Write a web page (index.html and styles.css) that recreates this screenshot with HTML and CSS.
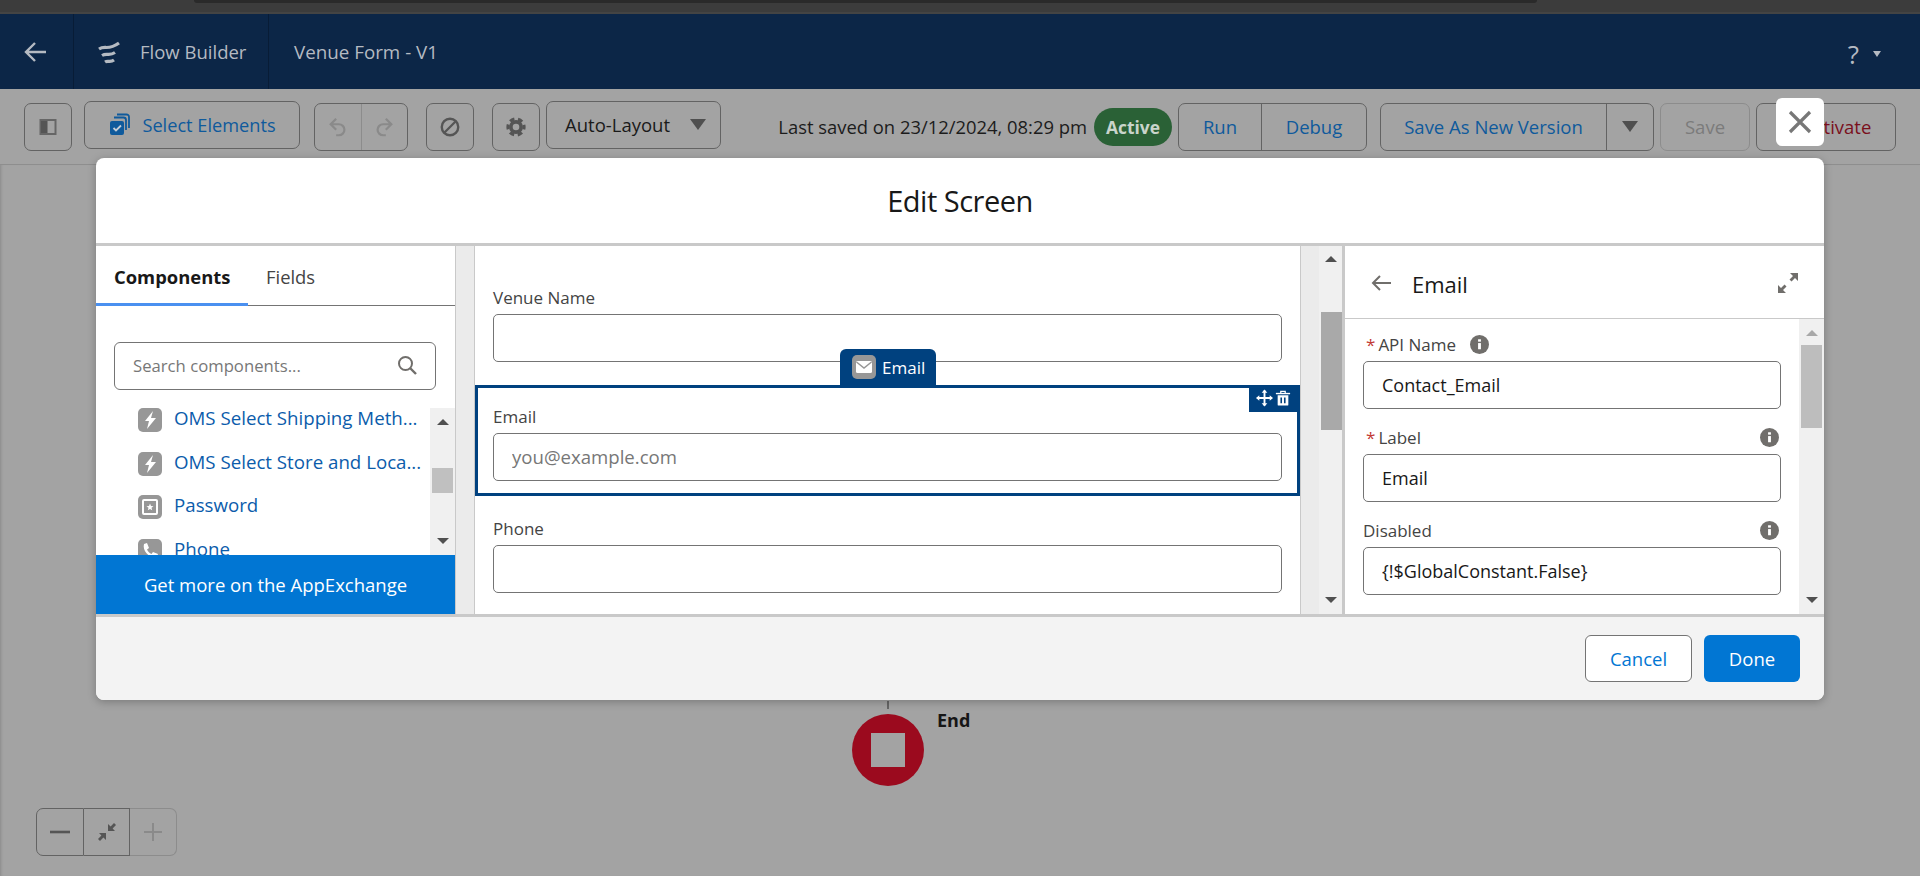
FILE: index.html
```html
<!DOCTYPE html>
<html lang="en">
<head>
<meta charset="UTF-8">
<title>Flow Builder - Venue Form</title>
<link rel="stylesheet" href="styles.css">
</head>
<body>
<div class="browser-strip"><div class="browser-tab"></div></div>

<header class="app-header">
  <div class="header-back">
    <svg class="icon-24" viewBox="0 0 24 24"><path d="M22 12H3M11 3l-9 9 9 9" fill="none" stroke="#b5bac2" stroke-width="2.4"/></svg>
  </div>
  <div class="header-brand">
    <svg class="icon-24" viewBox="0 0 24 24"><path d="M2 9c6-4 9 2 20-6M5 15.500c5-3 7 1 13-3M8 22c3-2 5 1 9-2" fill="none" stroke="#b5bac2" stroke-width="3.200"/></svg>
    <span>Flow Builder</span>
  </div>
  <div class="header-title">Venue Form - V1</div>
  <div class="header-help">?<span class="caret-small"></span></div>
</header>

<div class="toolbar">
  <button class="tool w48"><svg class="icon-18" viewBox="0 0 18 18"><rect x="1.500" y="2" width="15" height="14" fill="none" stroke="#666" stroke-width="2"/><rect x="2" y="3" width="6.500" height="12" fill="#555"/></svg></button>
  <button class="tool raised select-btn">
    <svg class="icon-24" viewBox="0 0 24 24"><path d="M9 1.500h9.500a2.500 2.500 0 0 1 2.500 2.500v11" fill="none" stroke="#0f5a9c" stroke-width="1.800"/><path d="M6 4.500h9.500a2.500 2.500 0 0 1 2.500 2.500v10" fill="none" stroke="#0f5a9c" stroke-width="1.800"/><rect x="2" y="8" width="14" height="14" rx="2" fill="#0f5a9c"/><path d="M5.500 15l2.500 2.500 5-5" fill="none" stroke="#c5cdd6" stroke-width="1.800"/></svg>
    Select Elements
  </button>
  <div class="tool-group undo-group">
    <button class="tool-seg off"><svg class="icon-22" viewBox="0 0 24 24"><path d="M10 3L4 9l6 6M4 9h9a6 6 0 0 1 0 12h-3" fill="none" stroke="#8a8a8a" stroke-width="2.400"/></svg></button>
    <button class="tool-seg off"><svg class="icon-22" viewBox="0 0 24 24"><path d="M14 3l6 6-6 6M20 9h-9a6 6 0 0 0 0 12h3" fill="none" stroke="#8a8a8a" stroke-width="2.400"/></svg></button>
  </div>
  <button class="tool w48 stop-btn"><svg class="icon-22" viewBox="0 0 24 24"><circle cx="12" cy="12" r="9" fill="none" stroke="#555" stroke-width="2.600"/><path d="M6 18L18 6" stroke="#555" stroke-width="2.600"/></svg></button>
  <button class="tool w48 gear-btn"><svg class="icon-22" viewBox="0 0 24 24"><circle cx="12" cy="12" r="8.800" fill="none" stroke="#555" stroke-width="3.400" stroke-dasharray="5.200 4" stroke-dashoffset="2.600"/><circle cx="12" cy="12" r="5.600" fill="none" stroke="#555" stroke-width="4"/></svg></button>
  <button class="tool raised layout-btn">Auto-Layout<span class="caret"></span></button>

  <div class="toolbar-right">
    <span class="saved-text">Last saved on 23/12/2024, 08:29 pm</span>
    <span class="status-pill">Active</span>
    <div class="tool-group run-group">
      <button class="tool-seg link run-seg">Run</button>
      <button class="tool-seg link debug-seg">Debug</button>
    </div>
    <div class="tool-group save-group">
      <button class="tool-seg link saveas-seg">Save As New Version</button>
      <button class="tool-seg menu-seg"><span class="caret"></span></button>
    </div>
    <button class="tool off-btn save-btn">Save</button>
    <button class="tool deactivate-btn">Deactivate</button>
  </div>
</div>

<main class="canvas">
  <div class="end-line"></div>
  <div class="end-node"><div class="end-square"></div></div>
  <div class="end-label">End</div>

  <div class="zoom-control">
    <button class="zoom-seg"><svg class="icon-20" viewBox="0 0 20 20"><path d="M0 10h20" stroke="#555" stroke-width="2.600"/></svg></button>
    <button class="zoom-seg zoom-mid"><svg class="icon-20" viewBox="0 0 20 20"><path d="M11 9h7l-2.400-2.400L19 3l-2-2-3.400 3.400L11 2zM9 11H2l2.400 2.400L1 17l2 2 3.400-3.400L9 18z" fill="#555"/></svg></button>
    <button class="zoom-seg zoom-off"><svg class="icon-20" viewBox="0 0 20 20"><path d="M1 10h18M10 1v18" stroke="#8a8a8a" stroke-width="2"/></svg></button>
  </div>
</main>

<section class="modal">
  <button class="modal-close"><svg class="icon-26" viewBox="0 0 26 26"><path d="M3 3l20 20M23 3L3 23" stroke="#777" stroke-width="3.200"/></svg></button>
  <h1 class="modal-title">Edit Screen</h1>

  <div class="modal-body">
    <aside class="palette">
      <div class="tabs">
        <div class="tab tab-active">Components</div>
        <div class="tab">Fields</div>
      </div>
      <div class="search-wrap">
        <div class="search-box">
          <span>Search components...</span>
          <svg class="icon-20" viewBox="0 0 20 20"><circle cx="8.500" cy="8.500" r="6.500" fill="none" stroke="#706e6b" stroke-width="2"/><path d="M13 13l6 6" stroke="#706e6b" stroke-width="2.400"/></svg>
        </div>
      </div>
      <div class="palette-list-wrap">
        <ul class="palette-list">
          <li><span class="comp-icon"><svg viewBox="0 0 24 24"><path d="M15 3l-8 10h4l-2 8 9-11h-5z" fill="#fff"/></svg></span><span class="comp-name">OMS Select Shipping Meth...</span></li>
          <li><span class="comp-icon"><svg viewBox="0 0 24 24"><path d="M15 3l-8 10h4l-2 8 9-11h-5z" fill="#fff"/></svg></span><span class="comp-name">OMS Select Store and Loca...</span></li>
          <li><span class="comp-icon"><svg viewBox="0 0 24 24"><rect x="5" y="5" width="14" height="14" rx="1" fill="none" stroke="#fff" stroke-width="2"/><path d="M12 8.500l1 2.500 2.500.2-2 1.600.7 2.500-2.200-1.400-2.200 1.400.7-2.500-2-1.600 2.500-.2z" fill="#fff"/></svg></span><span class="comp-name">Password</span></li>
          <li><span class="comp-icon"><svg viewBox="0 0 24 24"><path d="M6 5l3-1 2 5-2 1.500c1 2 2.500 3.500 4.500 4.500l1.500-2 5 2-1 3c-7 2-15-6-13-13z" fill="#fff"/></svg></span><span class="comp-name">Phone</span></li>
        </ul>
        <div class="scrollbar list-scroll">
          <span class="arrow-up"></span>
          <span class="thumb"></span>
          <span class="arrow-down"></span>
        </div>
      </div>
      <div class="appexchange">Get more on the AppExchange</div>
    </aside>

    <div class="gutter"></div>

    <div class="screen-canvas">
      <div class="screen-field">
        <label class="field-label">Venue Name</label>
        <input class="text-input" type="text">
      </div>
      <div class="screen-field selected">
        <div class="selected-tab">
          <span class="comp-icon"><svg viewBox="0 0 24 24"><rect x="4" y="6" width="16" height="12" rx="1.500" fill="#fff"/><path d="M4.500 7l7.500 6 7.500-6" fill="none" stroke="#979797" stroke-width="1.500"/></svg></span>
          Email
        </div>
        <div class="selected-actions">
          <svg class="icon-move" viewBox="0 0 18 18"><path d="M9 1v16M1 9h16" stroke="#fff" stroke-width="2"/><path d="M9 0l3 3.500H6zM9 18l3-3.500H6zM0 9l3.500-3v6zM18 9l-3.500-3v6z" fill="#fff"/></svg>
          <svg class="icon-trash" viewBox="0 0 18 18"><path d="M1 4h16" stroke="#fff" stroke-width="1.600"/><path d="M6.500 3.500V1.500h5v2" fill="none" stroke="#fff" stroke-width="1.400"/><path d="M3 6h12v10.500a1 1 0 0 1-1 1H4a1 1 0 0 1-1-1z" fill="#fff"/><path d="M7 8.500v6.500M11 8.500v6.500" stroke="#00417f" stroke-width="1.800"/></svg>
        </div>
        <label class="field-label">Email</label>
        <input class="text-input" type="text" placeholder="you@example.com">
      </div>
      <div class="screen-field">
        <label class="field-label">Phone</label>
        <input class="text-input" type="text">
      </div>
    </div>

    <div class="gutter gutter-right"></div>
    <div class="scrollbar canvas-scroll">
      <span class="arrow-up"></span>
      <span class="thumb"></span>
      <span class="arrow-down"></span>
    </div>

    <aside class="props">
      <div class="props-header">
        <svg class="icon-20" viewBox="0 0 20 20"><path d="M20 10H2M9 3l-7 7 7 7" fill="none" stroke="#706e6b" stroke-width="2"/></svg>
        <span class="props-title">Email</span>
        <svg class="icon-22 props-expand" viewBox="0 0 22 22"><path d="M13 1h8v8l-3-3-3.500 3.500-2-2L16 4zM1 13v8h8l-3-3 3.500-3.500-2-2L4 16z" fill="#706e6b"/></svg>
      </div>
      <div class="props-scroll-area">
        <div class="props-form">
          <div class="prop-field">
            <div class="prop-label"><span class="req">*</span>API Name
              <svg class="info api-info" viewBox="0 0 20 20"><circle cx="10" cy="10" r="10" fill="#706e6b"/><rect x="8.500" y="8.500" width="3" height="6.500" fill="#fff"/><rect x="8.500" y="4.500" width="3" height="2.500" fill="#fff"/></svg>
            </div>
            <input class="text-input" type="text" value="Contact_Email">
          </div>
          <div class="prop-field">
            <div class="prop-label"><span class="req">*</span>Label
              <svg class="info" viewBox="0 0 20 20"><circle cx="10" cy="10" r="10" fill="#706e6b"/><rect x="8.500" y="8.500" width="3" height="6.500" fill="#fff"/><rect x="8.500" y="4.500" width="3" height="2.500" fill="#fff"/></svg>
            </div>
            <input class="text-input" type="text" value="Email">
          </div>
          <div class="prop-field">
            <div class="prop-label">Disabled
              <svg class="info" viewBox="0 0 20 20"><circle cx="10" cy="10" r="10" fill="#706e6b"/><rect x="8.500" y="8.500" width="3" height="6.500" fill="#fff"/><rect x="8.500" y="4.500" width="3" height="2.500" fill="#fff"/></svg>
            </div>
            <input class="text-input" type="text" value="{!$GlobalConstant.False}">
          </div>
        </div>
        <div class="scrollbar props-scroll">
          <span class="arrow-up dim"></span>
          <span class="thumb"></span>
          <span class="arrow-down"></span>
        </div>
      </div>
    </aside>
  </div>

  <footer class="modal-footer">
    <button class="btn-cancel">Cancel</button>
    <button class="btn-done">Done</button>
  </footer>
</section>
</body>
</html>
```

FILE: styles.css
```css
* {
  box-sizing: border-box;
}
html, body {
  margin: 0;
  padding: 0;
  height: 876px;
  overflow: hidden;
}
body {
  font-family: "Open Sans", "Noto Sans", sans-serif;
  font-size: 18px;
  color: #181818;
  background-color: #a3a3a3;
  display: flex;
  flex-direction: column;
}
button, input {
  font-family: inherit;
  font-size: inherit;
  margin: 0;
}
svg {
  display: block;
  flex: none;
}
.icon-18 { width: 18px; height: 18px; }
.icon-20 { width: 20px; height: 20px; }
.icon-22 { width: 22px; height: 22px; }
.icon-24 { width: 24px; height: 24px; }
.icon-26 { width: 26px; height: 26px; }
.icon-move { width: 17px; height: 18px; }
.icon-trash { width: 16px; height: 18px; }

/* top of the browser window */
.browser-strip {
  height: 14px;
  flex: none;
  background-color: #3c3c3c;
  border-bottom: 2px solid #444;
}
.browser-tab {
  margin-left: 194px;
  width: 1343px;
  height: 3px;
  background-color: #2a2a2a;
  border-radius: 0 0 4px 4px;
}

/* navy app header */
.app-header {
  height: 75px;
  flex: none;
  display: flex;
  align-items: center;
  background-color: #0c2647;
  color: #b5bac2;
  font-size: 18.500px;
}
.header-back {
  width: 74px;
  height: 100%;
  display: flex;
  align-items: center;
  padding-left: 24px;
  border-right: 1px solid #081c36;
}
.header-brand {
  width: 195px;
  height: 100%;
  display: flex;
  align-items: center;
  gap: 19px;
  padding-left: 23px;
  border-right: 1px solid #081c36;
}
.header-title {
  padding-left: 25px;
  font-size: 18.800px;
}
.header-help {
  margin-left: auto;
  margin-right: 39px;
  display: flex;
  align-items: center;
  gap: 14px;
  font-size: 26px;
  padding-top: 4px;
}
.caret-small {
  width: 0;
  height: 0;
  border-left: 4px solid transparent;
  border-right: 4px solid transparent;
  border-top: 6px solid #b5bac2;
}

/* toolbar under the header */
.toolbar {
  height: 76px;
  flex: none;
  display: flex;
  align-items: center;
  padding: 0 24px;
  background-color: #a3a3a3;
  border-bottom: 1px solid #8e8e8e;
}
.tool {
  height: 48px;
  background: transparent;
  border: 1px solid #636363;
  border-radius: 7px;
  color: #0f5a9c;
  display: flex;
  align-items: center;
  justify-content: center;
  padding: 0;
}
.w48 { width: 48px; }
.raised {
  margin-bottom: 4px;
}
.select-btn {
  width: 216px;
  margin-left: 12px;
  gap: 10px;
  font-size: 18.200px;
}
.undo-group { margin-left: 14px; width: 94px; border-color: #8c8c8c; }
.stop-btn { margin-left: 18px; }
.gear-btn { margin-left: 18px; }
.layout-btn {
  width: 175px;
  margin-left: 6px;
  color: #1a1a1a;
  font-size: 18.500px;
  justify-content: flex-start;
  padding-left: 18px;
}
.layout-btn .caret {
  margin-left: 20px;
}
.caret {
  width: 0;
  height: 0;
  border-left: 8px solid transparent;
  border-right: 8px solid transparent;
  border-top: 11px solid #4f4f4f;
}
.tool-group {
  height: 48px;
  display: flex;
  border: 1px solid #636363;
  border-radius: 7px;
}
.tool-seg {
  height: 100%;
  background: transparent;
  border: 0;
  border-right: 1px solid #636363;
  display: flex;
  align-items: center;
  justify-content: center;
  padding: 0;
  flex: 1;
}
.tool-seg:last-child {
  border-right: 0;
}
.undo-group .tool-seg {
  border-color: #8c8c8c;
}
.link {
  color: #0f5a9c;
  font-size: 18.500px;
}
.toolbar-right {
  margin-left: auto;
  display: flex;
  align-items: center;
}
.saved-text {
  font-size: 18.400px;
  color: #1c1c1c;
  white-space: nowrap;
  margin-right: 7px;
}
.status-pill {
  width: 78px;
  height: 38px;
  border-radius: 19px;
  background-color: #2a6136;
  color: #c9d4cb;
  font-weight: 700;
  font-size: 17.400px;
  display: flex;
  align-items: center;
  justify-content: center;
}
.run-group { margin-left: 6px; width: 189px; }
.run-seg { flex: none; width: 83px; }
.save-group { margin-left: 13px; width: 274px; }
.saveas-seg { flex: none; width: 226px; }
.save-btn {
  width: 90px;
  margin-left: 6px;
  border-color: #8c8c8c;
  color: #7b7b7b;
  font-size: 18.500px;
}
.deactivate-btn {
  width: 140px;
  margin-left: 6px;
  color: #7a0f1c;
  font-size: 18.500px;
}

/* flow canvas behind the modal */
.canvas {
  flex: 1;
  position: relative;
  background-color: #a3a3a3;
  box-shadow: inset 3px 0 3px -2px #8a8a8a;
}
.end-line {
  position: absolute;
  left: 887px;
  top: 536px;
  width: 2px;
  height: 8px;
  background-color: #666;
}
.end-node {
  position: absolute;
  left: 852px;
  top: 549px;
  width: 72px;
  height: 72px;
  border-radius: 50%;
  background-color: #9b0a1e;
  display: flex;
  align-items: center;
  justify-content: center;
}
.end-square {
  width: 34px;
  height: 34px;
  background-color: #a3a3a3;
}
.end-label {
  position: absolute;
  left: 937px;
  top: 543px;
  font-weight: 700;
  font-size: 18px;
  color: #161616;
}
.zoom-control {
  position: absolute;
  left: 36px;
  top: 643px;
  width: 141px;
  height: 48px;
  display: flex;
}
.zoom-seg {
  width: 48px;
  background: transparent;
  border: 1px solid #636363;
  display: flex;
  align-items: center;
  justify-content: center;
  padding: 0;
  border-radius: 7px 0 0 7px;
}
.zoom-mid {
  width: 46px;
  border-left: 0;
  border-radius: 0;
}
.zoom-off {
  width: 47px;
  border-left: 0;
  border-color: #8c8c8c;
  border-radius: 0 7px 7px 0;
}

/* modal */
.modal {
  position: absolute;
  left: 96px;
  top: 158px;
  width: 1728px;
  height: 542px;
  background-color: #fff;
  border-radius: 8px;
  box-shadow: 0 2px 8px rgba(0, 0, 0, .25);
  display: flex;
  flex-direction: column;
}
.modal-close {
  position: absolute;
  right: 0;
  top: -60px;
  width: 48px;
  height: 48px;
  background-color: #fff;
  border: 0;
  border-radius: 6px;
  display: flex;
  align-items: center;
  justify-content: center;
  padding: 0;
}
.modal-title {
  height: 85px;
  flex: none;
  margin: 0;
  font-size: 29px;
  font-weight: 400;
  line-height: 85px;
  text-align: center;
  letter-spacing: -.5px;
}
.modal-body {
  height: 374px;
  flex: none;
  display: flex;
  border-top: 3px solid #c9c9c9;
  border-bottom: 3px solid #c9c9c9;
}
.modal-footer {
  flex: 1;
  display: flex;
  align-items: flex-start;
  justify-content: flex-end;
  gap: 12px;
  padding: 18px 24px 0 0;
  background-color: #f3f3f3;
  border-radius: 0 0 8px 8px;
}
.btn-cancel, .btn-done {
  height: 47px;
  border-radius: 6px;
  font-size: 18.500px;
  padding: 0;
}
.btn-cancel {
  width: 107px;
  background-color: #fff;
  border: 1px solid #747474;
  color: #0176d3;
}
.btn-done {
  width: 96px;
  background-color: #0176d3;
  border: 0;
  color: #fff;
}

/* left palette */
.palette {
  width: 360px;
  flex: none;
  display: flex;
  flex-direction: column;
  border-right: 1px solid #c9c9c9;
}
.tabs {
  height: 60px;
  flex: none;
  display: flex;
  border-bottom: 1px solid #747474;
}
.tab {
  padding: 18px 18px 0;
  color: #444;
  font-size: 18.400px;
  line-height: 25px;
}
.tab-active {
  width: 152px;
  height: 60px;
  font-weight: 700;
  color: #181818;
  border-bottom: 3px solid #4a90f0;
  white-space: nowrap;
}
.search-wrap {
  height: 102px;
  flex: none;
  padding: 36px 19px 0 18px;
}
.search-box {
  height: 48px;
  border: 1px solid #747474;
  border-radius: 6px;
  padding: 0 18px 2px 18px;
  display: flex;
  align-items: center;
  justify-content: space-between;
  color: #777;
  font-size: 16.700px;
}
.palette-list-wrap {
  height: 147px;
  flex: none;
  display: flex;
}
.palette-list {
  flex: 1;
  min-width: 0;
  margin: 0;
  padding: 0 0 0 42px;
  list-style: none;
}
.palette-list li {
  height: 43.670px;
  display: flex;
  align-items: flex-start;
  gap: 12px;
  color: #0b5cab;
  font-size: 18.700px;
  line-height: 20px;
  white-space: nowrap;
}
.comp-icon {
  width: 24px;
  height: 24px;
  flex: none;
  background-color: #979797;
  border-radius: 5px;
}
/* sits on top of the list, so the last row runs under it */
.appexchange {
  flex: 1;
  position: relative;
  background-color: #0176d3;
  color: #fff;
  font-size: 18.500px;
  display: flex;
  align-items: center;
  justify-content: center;
}

/* scrollbars */
.scrollbar {
  flex: none;
  display: flex;
  flex-direction: column;
  align-items: center;
  background-color: #f0f0f0;
}
.thumb {
  width: 21px;
}
.arrow-up, .arrow-down {
  width: 0;
  height: 0;
  border-left: 6px solid transparent;
  border-right: 6px solid transparent;
}
.arrow-up {
  border-bottom: 6px solid #505050;
}
.arrow-up.dim {
  border-bottom-color: #a8a8a8;
}
.arrow-down {
  margin-top: auto;
  border-top: 6px solid #505050;
}
.list-scroll {
  width: 25px;
  padding: 11px 0 11px;
}
.list-scroll .thumb {
  height: 25px;
  margin-top: 43px;
  background-color: #c0c0c0;
}
.canvas-scroll {
  width: 23px;
  padding: 10px 0 11px 0;
}
.canvas-scroll .thumb {
  height: 118px;
  margin-top: 50px;
  background-color: #a9a9a9;
  margin-left: 2px;
}
.props-scroll {
  width: 25px;
  padding: 11px 0 11px;
}
.props-scroll .thumb {
  height: 83px;
  margin-top: 9px;
  background-color: #bdbdbd;
}

.gutter {
  width: 19px;
  flex: none;
  background-color: #ebebeb;
  border-right: 1px solid #c9c9c9;
}
.gutter-right {
  border-right: 0;
  border-left: 1px solid #c9c9c9;
}

/* screen preview */
.screen-canvas {
  width: 825px;
  flex: none;
  padding-top: 29px;
}
.screen-field {
  position: relative;
  padding: 0 18px;
}
.field-label {
  display: block;
  height: 39px;
  padding-top: 12px;
  color: #444;
  font-size: 17px;
  line-height: 22px;
}
.text-input {
  display: block;
  width: 100%;
  height: 48px;
  background-color: #fff;
  border: 1px solid #747474;
  border-radius: 5px;
  padding: 0 18px;
  color: #181818;
  font-size: 18px;
  outline: 0;
}
.text-input::placeholder {
  color: #777;
  opacity: 1;
}
.selected {
  height: 111px;
  margin-top: 23px;
  margin-bottom: 10px;
  border: 3px solid #00417f;
  padding: 9px 15px 0;
}
.selected .field-label {
  height: 36px;
  padding-top: 9px;
}
.selected .text-input {
  font-size: 18.600px;
  padding-bottom: 2px;
}
.selected-tab {
  position: absolute;
  left: 362px;
  top: -39px;
  width: 96px;
  height: 36px;
  background-color: #00417f;
  border-radius: 6px 6px 0 0;
  display: flex;
  align-items: center;
  gap: 6px;
  padding-left: 12px;
  color: #fff;
  font-size: 17px;
}
.selected-actions {
  position: absolute;
  right: -3px;
  top: -3px;
  width: 51px;
  height: 27px;
  background-color: #00417f;
  display: flex;
  align-items: center;
  gap: 2px;
  padding: 0 0 2px 7px;
}

/* right properties panel */
.props {
  flex: 1;
  display: flex;
  flex-direction: column;
  border-left: 3px solid #c9c9c9;
  min-width: 0;
}
.props-header {
  height: 73px;
  flex: none;
  display: flex;
  align-items: center;
  padding: 2px 25px 0 26px;
  gap: 21px;
  border-bottom: 1px solid #c9c9c9;
}
.props-title {
  font-size: 22px;
  margin-top: 2px;
}
.props-expand {
  margin-left: auto;
}
.props-scroll-area {
  flex: 1;
  display: flex;
  overflow: hidden;
}
.props-form {
  flex: 1;
  padding: 8px 18px 0 18px;
}
.prop-field {
  margin-bottom: 11px;
}
.prop-label {
  height: 34px;
  display: flex;
  align-items: center;
  color: #444;
  font-size: 17px;
}
.req {
  color: #c23934;
  margin: 0 3px 0 3px;
}
.info {
  width: 19px;
  height: 19px;
  margin-left: auto;
  margin-right: 2px;
}
.api-info {
  margin-left: 14px;
  margin-right: 0;
}
```
